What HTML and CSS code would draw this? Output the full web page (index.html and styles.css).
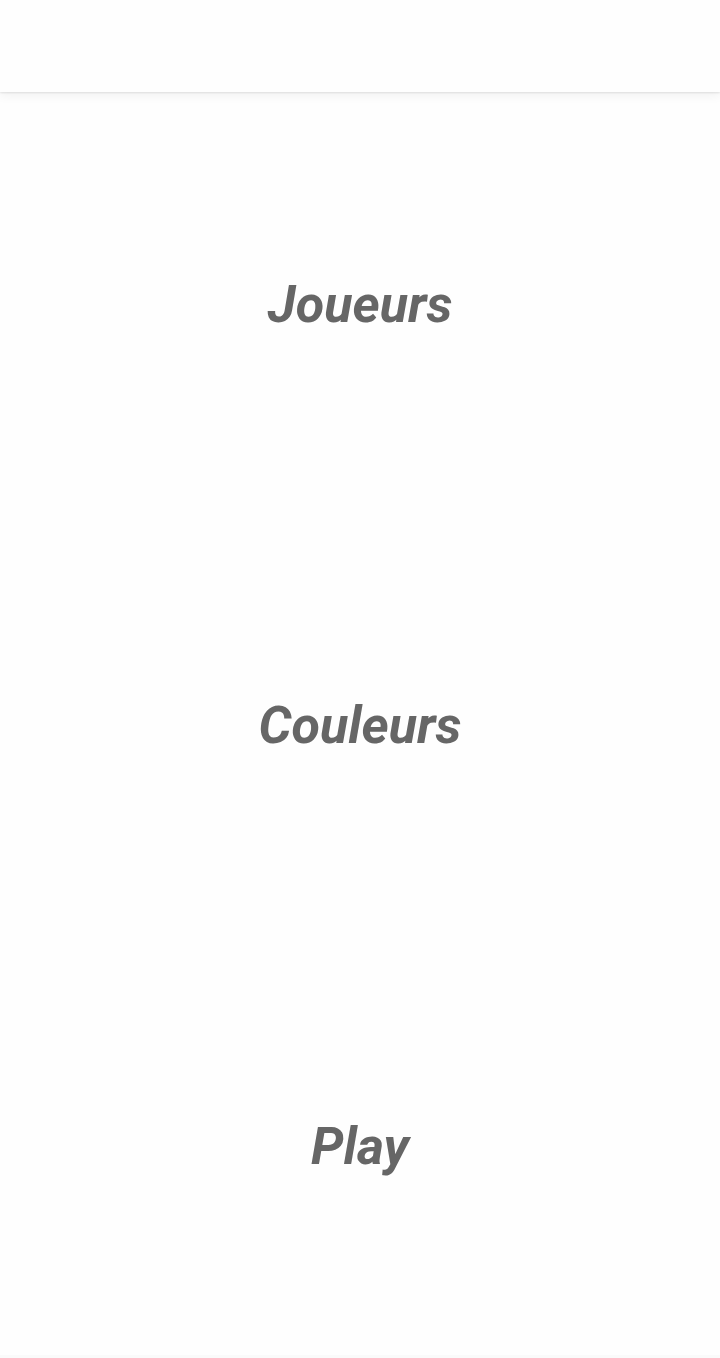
FILE: index.html
```html
<!DOCTYPE html>
<html lang="fr">
<head>
<meta charset="utf-8">
<title>Menu</title>
<link rel="stylesheet" href="styles.css">
</head>
<body>
<header class="topbar"></header>
<main class="menu">
  <a class="menu-item">Joueurs</a>
  <a class="menu-item">Couleurs</a>
  <a class="menu-item">Play</a>
</main>
<footer class="bottom-strip"></footer>
</body>
</html>
```
FILE: styles.css
```css
html, body {
  margin: 0;
  padding: 0;
  height: 100%;
}
body {
  background: #fefefe;
  font-family: Roboto, "Liberation Sans", sans-serif;
  display: flex;
  flex-direction: column;
  width: 720px;
  height: 1358px;
  overflow: hidden;
}
.topbar {
  height: 92px;
  flex: 0 0 92px;
  background: #fefefe;
  box-shadow: 0 1px 2px rgba(0,0,0,0.10), 0 4px 10px rgba(0,0,0,0.05);
  position: relative;
  z-index: 1;
}
.menu {
  flex: 1 1 auto;
  display: grid;
  grid-template-rows: 1fr 1fr 1fr;
}
.menu-item {
  display: flex;
  align-items: center;
  justify-content: center;
  padding-top: 4px;
  font-size: 52px;
  font-weight: 700;
  font-style: italic;
  color: #666666;
  text-decoration: none;
}
.bottom-strip {
  flex: 0 0 3px;
  background: #fafafa;
}
```
